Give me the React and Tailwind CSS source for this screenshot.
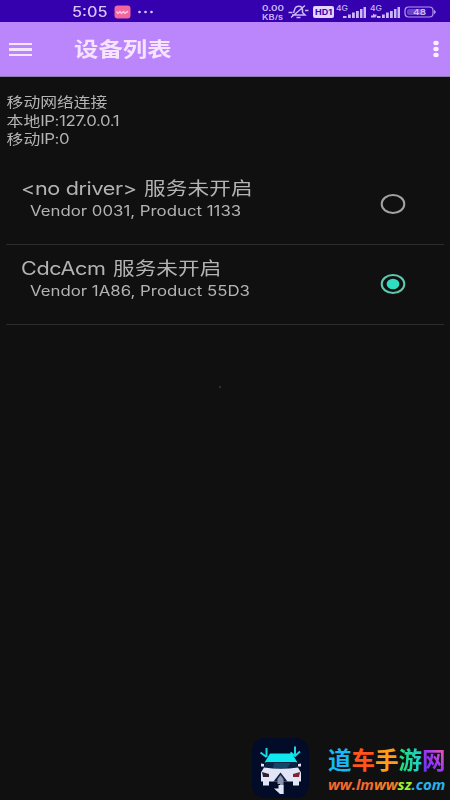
import React from 'react';

const devices = [
  { name: '<no driver>', detail: 'Vendor 0031, Product 1133', selected: false },
  { name: 'CdcAcm', detail: 'Vendor 1A86, Product 55D3', selected: true },
];

function Signal({ dual }) {
  return (
    <svg className="h-[14px] w-[30px]" viewBox="0 0 30 14" fill="#cbb8fa">
      <text x="0" y="6" fontSize="7" fontWeight="500" fontFamily="Inter" textLength="12" lengthAdjust="spacingAndGlyphs">4G</text>
      {dual && <path d="M1 10.500h2v-2l2.500 2v2H1zM4.500 9.500h2v2h-2z" />}
      <path d="M7 11h3.500v2H7zM12 9.500h2.800v3.500H12zM16 7.500h2.800v5.500H16zM20 6h2.800v7H20zM24 4h2.500v9H24zM27.500 2H30v11h-2.500z" />
    </svg>
  );
}

function StatusBar() {
  return (
    <div className="flex h-[22px] items-center bg-[#3500ad] pl-[72px] pt-px text-[#d9c8ff]">
      <div className="w-[42px] text-[14px] leading-none">
        <span className="inline-block origin-left scale-x-[1.160] font-medium">5:05</span>
      </div>
      <svg className="h-3.5 w-[17px]" viewBox="0 0 17 14">
        <rect x="0.500" y="0.500" width="16" height="13" rx="3" fill="#f2659f" />
        <path d="M2.500 6.500l1.500 2 2-2 1.500 2 2-2 1.500 2 2-2 1 1" fill="none" stroke="#ffc4dc" strokeWidth="1.300" />
      </svg>
      <svg className="ml-[7px] h-1 w-4" viewBox="0 0 16 4" fill="#d9c8ff">
        <circle cx="1.500" cy="2" r="1.300" />
        <circle cx="7.500" cy="2" r="1.300" />
        <circle cx="13.500" cy="2" r="1.300" />
      </svg>
      <svg className="ml-[108px] h-4 w-[26px]" viewBox="0 0 26 16" fill="#cbb8fa" fontSize="7.500" fontWeight="600" fontFamily="Inter">
        <text x="0" y="7" textLength="22" lengthAdjust="spacingAndGlyphs">0.00</text>
        <text x="0" y="15.500" textLength="21" lengthAdjust="spacingAndGlyphs">KB/s</text>
      </svg>
      <svg className="h-[15px] w-[21px]" viewBox="0 0 21 15" fill="none" stroke="#cbb8fa" strokeWidth="1.500">
        <path d="M4 11h13l-2.500-2.500V6c0-5-7-5-8 0l-1 3M8.500 13.500h4M3 13.500L17 1.500M0.500 8.500h4M17 6.500h3.500" />
      </svg>
      <svg className="ml-1 h-3 w-[21px]" viewBox="0 0 21 12">
        <rect width="21" height="12" rx="2" fill="#e3d5ff" />
        <text x="2" y="9" fontSize="8" fontWeight="700" fontFamily="Inter" fill="#3500ad" textLength="17" lengthAdjust="spacingAndGlyphs">HD1</text>
      </svg>
      <div className="ml-[2px] flex gap-1">
        <Signal />
        <Signal dual />
      </div>
      <svg className="ml-1 h-3 w-8" viewBox="0 0 32 12" fill="none">
        <rect x="1" y="1" width="28" height="10" rx="3.500" stroke="#b59af2" strokeWidth="1.200" />
        <rect x="3" y="3" width="18" height="6" rx="2" fill="#6a43c8" />
        <path d="M30 3.500l2 2.500-2 2.500z" fill="#b59af2" />
        <text x="9" y="9" fontSize="8" fontWeight="500" fontFamily="Inter" fill="#d9c8ff" textLength="13" lengthAdjust="spacingAndGlyphs">48</text>
      </svg>
    </div>
  );
}

function AppBar() {
  return (
    <header className="flex h-[55px] items-center border-b border-[#8d7aa8] bg-[#bb86fc] pl-[9px] pr-[11px]">
      <div className="flex w-[65px] flex-col gap-[3px]">
        <span className="h-[2px] w-[23px] bg-[#f5e3ff]" />
        <span className="h-[3px] w-[23px] bg-[#f5e3ff]" />
        <span className="h-[2px] w-[23px] bg-[#f5e3ff]" />
      </div>
      <h1 className="mt-0.5 origin-left scale-x-[1.220] text-[20px] font-bold leading-none text-[#f5e3ff]">设备列表</h1>
      <svg className="ml-auto h-[18px] w-1.5" viewBox="0 0 6 18" fill="#fff0ff">
        <ellipse cx="3" cy="3" rx="2.700" ry="2.200" />
        <ellipse cx="3" cy="9" rx="2.700" ry="2.200" />
        <ellipse cx="3" cy="15" rx="2.700" ry="2.200" />
      </svg>
    </header>
  );
}

function Radio({ selected }) {
  return (
    <svg className="h-[22px] w-[26px]" viewBox="0 0 26 22" fill="none">
      <ellipse cx="13" cy="11" rx="11.300" ry="9" stroke={selected ? '#5fc9b0' : '#a3a3a3'} strokeWidth="2" />
      {selected && <ellipse cx="13" cy="11" rx="6.400" ry="5.200" fill="#2fdcc0" />}
    </svg>
  );
}

function DeviceRow({ device }) {
  return (
    <li className="flex h-20 items-start justify-between border-b border-[#2d2d2d] pl-[15px] pr-[38px] pt-3">
      <div className="whitespace-nowrap text-[#b3b3b3]">
        <div className="origin-left scale-x-[1.200] text-[18px] leading-6">
          <span className="tracking-[-0.3px]">{device.name}</span>{' '}
          <span className="ml-px tracking-[0.1px]">服务未开启</span>
        </div>
        <div className="ml-[9px] origin-left scale-x-[1.200] text-[14px] leading-5">{device.detail}</div>
      </div>
      <div className="mt-4">
        <Radio selected={device.selected} />
      </div>
    </li>
  );
}

function Logo() {
  return (
    <svg className="h-[60px] w-[57px]" viewBox="0 0 57 60">
      <rect width="57" height="60" rx="13" fill="#020b27" />
      <g fill="none" stroke="#12dbe6" strokeWidth="2">
        <path d="M14.500 10v9M8.500 14.500l6 4.500" />
        <path d="M43 8.500v9M38.500 14.500l4.500 3.500 5-4.500" />
      </g>
      <path d="M18 15.500h22l5.500 9H12.500z" fill="#0ee8ee" />
      <path d="M14 24h30l3 7H11z" fill="#0a2342" />
      <path d="M22 25h17l-4 5H21z" fill="#12456a" />
      <path d="M9 25.500l3 .5v2.500H9zM46 26l3-.5v3h-3z" fill="#e1e5f7" />
      <path d="M12 29.500q17 2.500 34 0l3 5v9h-2v4h-6v-4H17v4h-6v-4H9v-9z" fill="#e1e5f7" />
      <path d="M10 34l7 2v3h-6z" fill="#30202f" />
      <path d="M48 34l-7 2v3h6z" fill="#7c2431" />
      <path d="M28.500 34.500l7 9h-14z" fill="#101c3b" />
      <path d="M28.500 37l3 4v15h-3.500v-10h-2.500v-5z" fill="#8993b0" />
      <path d="M26.500 47h5v9h-3.500l-6-5.500h4.500z" fill="#e1e5f7" />
    </svg>
  );
}

function Watermark() {
  return (
    <footer className="mt-auto flex h-[62px] items-start pl-[252px]">
      <Logo />
      <div className="ml-[19px] whitespace-nowrap font-bold">
        <div className="mt-[7px] text-[23.500px] leading-[32px]">
          <span className="text-[#18b8f4]">道</span>
          <span className="text-[#ff541c]">车</span>
          <span className="text-[#ff9d16]">手</span>
          <span className="bg-linear-to-r from-[#22e06c] to-[#25cdd0] bg-clip-text text-transparent">游</span>
          <span className="bg-linear-to-tr from-[#5a2cff] via-[#9f35f5] to-[#ff4f93] bg-clip-text text-transparent">网</span>
        </div>
        <div className="font-['Open_Sans'] text-[15px] leading-[14px] italic">
          <span className="text-[#f5692d]">ww.lm</span>
          <span className="text-[#f57c27]">ww</span>
          <span className="text-[#a4ee35]">sz</span>
          <span className="text-[#27b3ee]">.com</span>
        </div>
      </div>
    </footer>
  );
}

export default function App() {
  return (
    <div className="flex h-[800px] w-[450px] flex-col overflow-hidden bg-[#101010] font-['Inter','Noto_Sans_CJK_SC',sans-serif]">
      <StatusBar />
      <AppBar />
      <div className="origin-left scale-x-[1.200] pl-[5.500px] pt-4 text-[14px] leading-[18.500px] text-[#b3b3b3]">
        <p>移动网络连接</p>
        <p>本地<span className="tracking-[-0.350px]">IP:127.0.0.1</span></p>
        <p>移动<span className="tracking-[-0.350px]">IP:0</span></p>
      </div>
      <ul className="mx-1.5 mt-[16px]">
        {devices.map((device) => (
          <DeviceRow key={device.name} device={device} />
        ))}
      </ul>
      <div className="ml-[219px] mt-[61px] size-[2px] rounded-full bg-[#3a3a3a]" />
      <Watermark />
    </div>
  );
}
